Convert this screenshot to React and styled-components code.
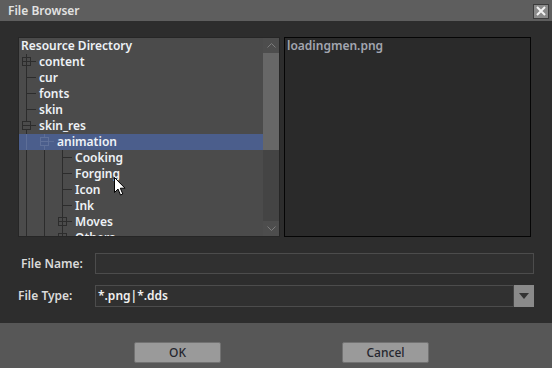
import React from 'react'
import styled, { createGlobalStyle } from 'styled-components'

const GlobalStyle = createGlobalStyle`
    *, *::before, *::after {
        box-sizing: border-box;
    }
    body {
        margin: 0;
        background: #2d2d2d;
        font-family: "Noto Sans", "Open Sans", sans-serif;
    }
`
const Window = styled.div`
    width: 552px;
    height: 368px;
    display: flex;
    flex-direction: column;
    position: relative;
    overflow: hidden;
    font-size: 12px;
    font-weight: 600;
`
const TitleBar = styled.div`
    height: 21px;
    flex-shrink: 0;
    background: #5e5e5e;
    display: flex;
    align-items: center;
    justify-content: space-between;
    padding: 0 3px 0 8px;
    color: #e2e2e2;
`
const CloseBtn = styled.div`
    width: 16px;
    height: 15px;
    margin-top: 1px;
    background: #8a8a8a;
    border: 1px solid #3c3c3c;
    display: flex;
    align-items: center;
    justify-content: center;
`
const Body = styled.div`
    flex: 1;
    background: #2d2d2d;
    padding: 16px 18px 0 18px;
    display: flex;
    flex-direction: column;
`
const Panels = styled.div`
    height: 200px;
    display: flex;
    gap: 4px;
    margin-right: 3px;
`
const TreePanel = styled.div`
    width: 262px;
    background: #4b4b4b;
    border: 1px solid #262626;
    display: flex;
    overflow: hidden;
`
const TreeList = styled.div`
    flex: 1;
    overflow: hidden;
`
const Row = styled.div`
    height: 16px;
    line-height: 15px;
    display: flex;
    align-items: stretch;
    color: #eef2f6;
    background: ${props => props.$selected ? '#4b5e8c' : 'transparent'};
    white-space: nowrap;
`
const Guide = styled.div`
    width: 18px;
    flex-shrink: 0;
    position: relative;
    &::before {
        content: '';
        position: absolute;
        left: 7px;
        top: 0;
        bottom: 0;
        border-left: 1px solid ${props => props.$sel ? 'rgba(255,255,255,0.1)' : '#2c2c2c'};
    }
    &::after {
        content: '';
        display: ${props => props.$own ? 'block' : 'none'};
        position: absolute;
        left: 7px;
        right: 1px;
        top: 7px;
        border-top: 1px solid ${props => props.$sel ? 'rgba(255,255,255,0.1)' : '#2c2c2c'};
    }
`
const Box = styled.div`
    position: absolute;
    left: 3px;
    top: 3px;
    width: 9px;
    height: 9px;
    border: 1px solid ${props => props.$sel ? 'rgba(255,255,255,0.12)' : '#2c2c2c'};
    background: ${props => props.$sel ? '#4b5e8c' : '#4b4b4b'};
    z-index: 1;
    &::before {
        content: '';
        position: absolute;
        left: 0;
        right: 0;
        top: 3px;
        border-top: 1px solid ${props => props.$sel ? 'rgba(255,255,255,0.12)' : '#2c2c2c'};
    }
    &::after {
        content: '';
        display: ${props => props.$open ? 'none' : 'block'};
        position: absolute;
        top: 0;
        bottom: 0;
        left: 3px;
        border-left: 1px solid #2c2c2c;
    }
`
const Label = styled.span`
    padding-left: 2px;
`
const Scrollbar = styled.div`
    width: 16px;
    flex-shrink: 0;
    display: flex;
    flex-direction: column;
    background: #444444;
`
const ScrollArrow = styled.div`
    height: 15px;
    background: #4d4d4d;
    display: flex;
    align-items: center;
    justify-content: center;
`
const Thumb = styled.div`
    height: 97px;
    background: #676767;
`
const Track = styled.div`
    flex: 1;
`
const FileList = styled.div`
    flex: 1;
    background: #2a2a2a;
    border: 1px solid #050505;
    color: #a3a6b0;
    padding: 0 2px;
    line-height: 15px;
`
const Form = styled.div`
    display: flex;
    flex-direction: column;
    gap: 11px;
    margin-top: 16px;
`
const FieldRow = styled.div`
    display: flex;
    align-items: center;
    height: 21px;
`
const FieldLabel = styled.div`
    width: 77px;
    padding-left: ${props => props.$inset}px;
    color: #dadada;
`
const TextInput = styled.div`
    flex: 1;
    height: 21px;
    background: #303030;
    border: 1px solid #4c4c4c;
    display: flex;
    align-items: center;
    color: #f0f0f0;
    padding-left: 2px;
`
const Combo = styled(TextInput)`
    height: 22px;
    border-right: none;
    justify-content: space-between;
`
const DropBtn = styled.div`
    width: 21px;
    height: 22px;
    background: #8a8a8a;
    border-left: 1px solid #444;
    display: flex;
    align-items: center;
    justify-content: center;
`
const Footer = styled.div`
    height: 45px;
    flex-shrink: 0;
    background: #575757;
    display: flex;
    align-items: flex-start;
    padding: 19px 0 0 134px;
    gap: 121px;
`
const Button = styled.div`
    width: 87px;
    height: 21px;
    background: #9a9a9a;
    border: 1px solid #727272;
    border-radius: 2px;
    color: #25262e;
    font-weight: 500;
    display: flex;
    align-items: center;
    justify-content: center;
`
const Cursor = styled.svg`
    position: absolute;
    left: 114px;
    top: 177px;
`

const tree = [
    { name: 'Resource Directory', level: 0 },
    { name: 'content', level: 1, box: 'closed' },
    { name: 'cur', level: 1 },
    { name: 'fonts', level: 1 },
    { name: 'skin', level: 1 },
    { name: 'skin_res', level: 1, box: 'open' },
    { name: 'animation', level: 2, box: 'open', selected: true },
    { name: 'Cooking', level: 3 },
    { name: 'Forging', level: 3 },
    { name: 'Icon', level: 3 },
    { name: 'Ink', level: 3 },
    { name: 'Moves', level: 3, box: 'closed' },
    { name: 'Others', level: 3, box: 'closed' },
]

const TreeRow = ({ item }) => {
    const guides = []
    for (let i = 1; i <= item.level; i++) {
        const own = i === item.level
        guides.push(
            <Guide key={i} $own={own} $sel={item.selected}>
                {own && item.box && <Box $open={item.box === 'open'} $sel={item.selected} />}
            </Guide>
        )
    }
    return (
        <Row $selected={item.selected}>
            {guides}
            <Label>{item.name}</Label>
        </Row>
    )
}

export default function App() {
    return (
        <Window>
            <GlobalStyle />
            <TitleBar>
                <span>File Browser</span>
                <CloseBtn>
                    <svg width="10" height="10" viewBox="0 0 10 10">
                        <path d="M1 1 L9 9 M9 1 L1 9" stroke="#f4f4f4" strokeWidth="2" />
                    </svg>
                </CloseBtn>
            </TitleBar>
            <Body>
                <Panels>
                    <TreePanel>
                        <TreeList>
                            {tree.map(item => <TreeRow key={item.name} item={item} />)}
                        </TreeList>
                        <Scrollbar>
                            <ScrollArrow>
                                <svg width="9" height="5" viewBox="0 0 9 5">
                                    <path d="M0.5 4.5 L4.5 0.5 L8.5 4.5" stroke="#7c7c7c" fill="none" />
                                </svg>
                            </ScrollArrow>
                            <Thumb />
                            <Track />
                            <ScrollArrow>
                                <svg width="9" height="5" viewBox="0 0 9 5">
                                    <path d="M0.5 0.5 L4.5 4.5 L8.5 0.5" stroke="#7c7c7c" fill="none" />
                                </svg>
                            </ScrollArrow>
                        </Scrollbar>
                    </TreePanel>
                    <FileList>loadingmen.png</FileList>
                </Panels>
                <Form>
                    <FieldRow>
                        <FieldLabel $inset={3}>File Name:</FieldLabel>
                        <TextInput />
                    </FieldRow>
                    <FieldRow>
                        <FieldLabel $inset={0}>File Type:</FieldLabel>
                        <Combo>
                            <span>*.png|*.dds</span>
                            <DropBtn>
                                <svg width="10" height="6" viewBox="0 0 10 6">
                                    <path d="M0 0 L10 0 L5 6 Z" fill="#333" />
                                </svg>
                            </DropBtn>
                        </Combo>
                    </FieldRow>
                </Form>
            </Body>
            <Footer>
                <Button>OK</Button>
                <Button>Cancel</Button>
            </Footer>
            <Cursor width="13" height="20" viewBox="0 0 13 20">
                <path d="M0.5 0.5 L0.5 15.5 L4 12 L6.5 18 L8.8 17 L6.3 11.2 L11 11.2 Z" fill="#fff" stroke="#000" strokeWidth="1" />
            </Cursor>
        </Window>
    )
}
